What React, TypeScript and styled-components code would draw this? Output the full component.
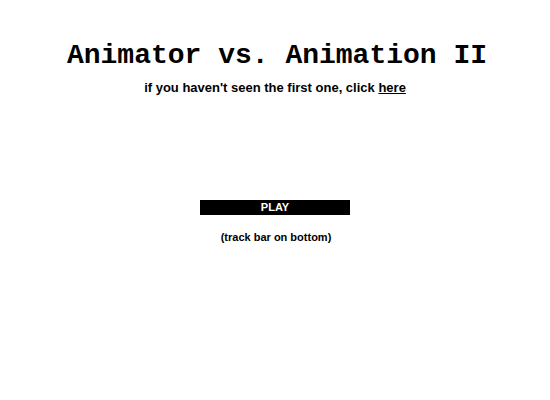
import React from "react";
import styled, { createGlobalStyle } from "styled-components";

const Global = createGlobalStyle`
  html, body { margin: 0; padding: 0; background: #fff; }
`;

const Page = styled.div`
  width: 550px;
  height: 400px;
  display: flex;
  flex-direction: column;
  align-items: center;
  font-family: "Liberation Sans", Arial, sans-serif;
  color: #000;
`;

const Title = styled.h1`
  margin: 42px 0 0 4px;
  font-family: "Liberation Mono", "Courier New", monospace;
  font-weight: bold;
  font-size: 28px;
  line-height: 28px;
  letter-spacing: 0;
`;

const Sub = styled.p`
  margin: 10px 0 0;
  font-size: 13px;
  font-weight: bold;
  line-height: 16px;
`;

const Link = styled.a`
  color: #000;
  text-decoration: underline;
`;

const PlayBar = styled.div`
  margin-top: 104px;
  width: 150px;
  height: 15px;
  background: #000;
  color: #fff;
  font-size: 11px;
  font-weight: bold;
  line-height: 15px;
  text-align: center;
`;

const Note = styled.p`
  margin: 15px 0 0 2px;
  font-size: 11px;
  font-weight: bold;
  line-height: 14px;
`;

export default function App() {
  return (
    <>
      <Global />
      <Page>
        <Title>Animator vs. Animation II</Title>
        <Sub>
          if you haven't seen the first one, click <Link href="#">here</Link>
        </Sub>
        <PlayBar>PLAY</PlayBar>
        <Note>(track bar on bottom)</Note>
      </Page>
    </>
  );
}
